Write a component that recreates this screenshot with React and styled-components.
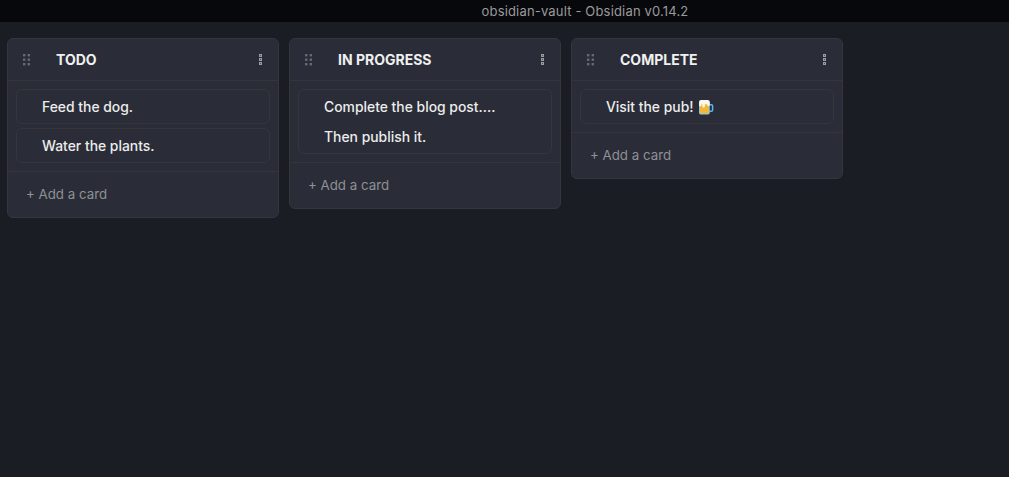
import React from "react";
import styled, { createGlobalStyle } from "styled-components";

const GlobalStyle = createGlobalStyle`
  html, body {
    margin: 0;
    height: 100%;
    background: #1a1d24;
    font-family: Inter, "Noto Sans", sans-serif;
  }
`;

const Page = styled.div`
  height: 477px;
  display: flex;
  flex-direction: column;
  overflow: hidden;
`;

const TitleBar = styled.div`
  height: 22px;
  flex-shrink: 0;
  background: #07080b;
  color: #9a9a9c;
  font-size: 13px;
  line-height: 23px;
  letter-spacing: 0.17px;
  text-align: center;
  padding-left: 161px;
`;

const Board = styled.div`
  display: flex;
  align-items: flex-start;
  gap: 10px;
  padding: 16px 7px;
`;

const Lane = styled.div`
  width: 272px;
  box-sizing: border-box;
  background: #2a2d37;
  border: 1px solid #34363c;
  border-radius: 6px;
`;

const LaneHeader = styled.div`
  height: 42px;
  box-sizing: border-box;
  display: flex;
  align-items: center;
  padding: 0 16px 0 15px;
  border-bottom: 1px solid #34353a;
`;

const Title = styled.div`
  flex: 1;
  margin-left: 25px;
  color: #f0f0f0;
  font-size: 14px;
  font-weight: 700;
`;

const Items = styled.div`
  display: flex;
  flex-direction: column;
  gap: 4px;
  padding: 8px;
`;

const Item = styled.div`
  border: 1px solid #34363c;
  border-radius: 6px;
  padding: 2px 25px 1px;
`;

const ItemLine = styled.div`
  height: 30px;
  display: flex;
  align-items: center;
  gap: 5px;
  color: #ececec;
  font-size: 13.9px;
  font-weight: 500;
`;

const Footer = styled.div`
  height: 46px;
  box-sizing: border-box;
  display: flex;
  align-items: center;
  padding: 0 18px 2px;
  border-top: 1px solid #34353a;
  color: #8f9095;
  font-size: 13.3px;
`;

const Grip = () => (
  <svg width="8" height="12" viewBox="0 0 8 12" fill="#686a70">
    {[0, 4.5, 9].map((y) => (
      <React.Fragment key={y}>
        <rect x="0" y={y} width="2.4" height="2.4" />
        <rect x="4.6" y={y} width="2.4" height="2.4" />
      </React.Fragment>
    ))}
  </svg>
);

const Dots = () => (
  <svg width="3" height="12" viewBox="0 0 3 12" fill="#55575e" stroke="#9b9ca0" strokeWidth="1">
    <rect x="0.5" y="0.5" width="2" height="2" />
    <rect x="0.5" y="4.5" width="2" height="2" />
    <rect x="0.5" y="8.5" width="2" height="2" />
  </svg>
);

const Beer = () => (
  <svg width="16" height="16" viewBox="0 0 15 15">
    <path d="M10.5 5.5h2a1.2 1.2 0 0 1 1.2 1.2v3.6a1.2 1.2 0 0 1-1.2 1.2h-2" fill="none" stroke="#5db4ee" strokeWidth="1.4" />
    <rect x="1" y="1.5" width="10" height="13" rx="1.5" fill="#8ccbf2" />
    <rect x="2" y="5" width="8" height="8.5" fill="#f6b62d" />
    <path d="M1 3a2 2 0 0 1 2-2h6a2 2 0 0 1 2 2v2.5a1.2 1.2 0 0 1-2.4 0V5H6.5v1.8a1.2 1.2 0 0 1-2.4 0V5H3.2v.8a1.1 1.1 0 0 1-2.2 0z" fill="#fbf6ea" />
  </svg>
);

const lanes = [
  { title: "TODO", items: [["Feed the dog."], ["Water the plants."]] },
  { title: "IN PROGRESS", items: [["Complete the blog post....", "Then publish it."]] },
  { title: "COMPLETE", items: [["Visit the pub!"]], beer: true },
];

export default function App() {
  return (
    <Page>
      <GlobalStyle />
      <TitleBar>obsidian-vault - Obsidian v0.14.2</TitleBar>
      <Board>
        {lanes.map((lane) => (
          <Lane key={lane.title}>
            <LaneHeader>
              <Grip />
              <Title>{lane.title}</Title>
              <Dots />
            </LaneHeader>
            <Items>
              {lane.items.map((lines) => (
                <Item key={lines[0]}>
                  {lines.map((line) => (
                    <ItemLine key={line}>
                      {line}
                      {lane.beer && <Beer />}
                    </ItemLine>
                  ))}
                </Item>
              ))}
            </Items>
            <Footer>+ Add a card</Footer>
          </Lane>
        ))}
      </Board>
    </Page>
  );
}
